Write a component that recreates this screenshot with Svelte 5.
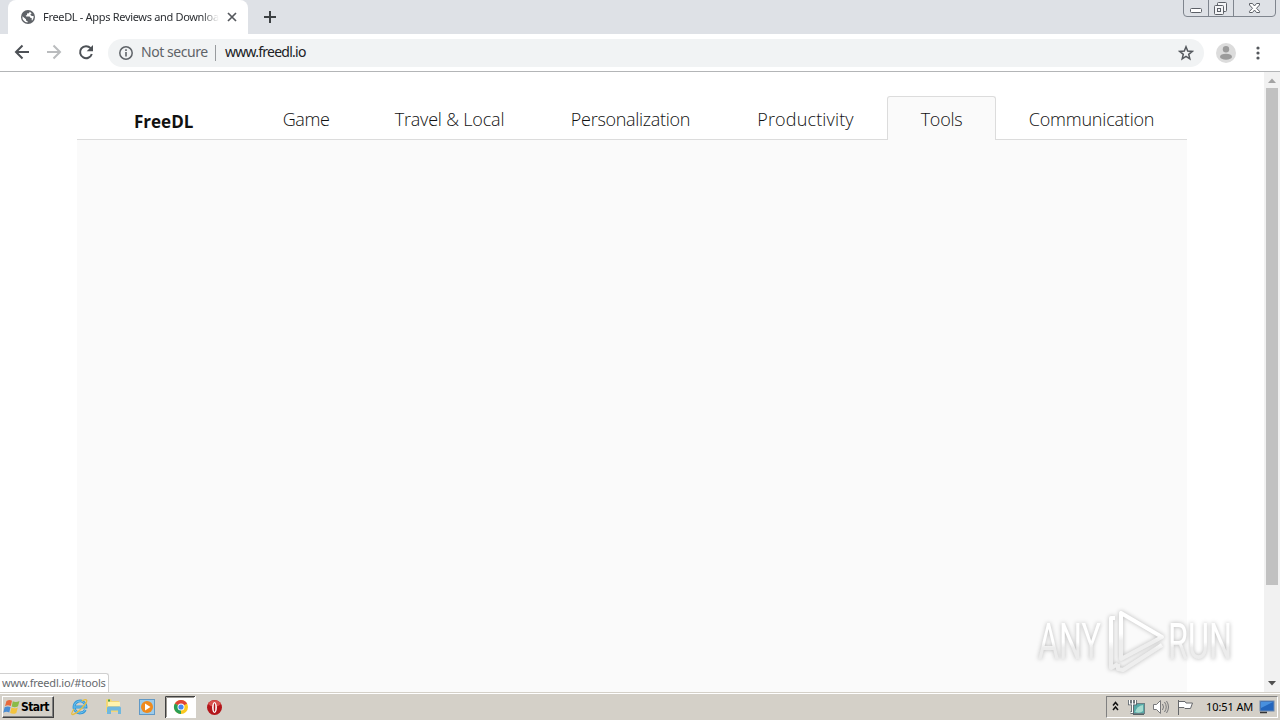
<script lang="ts">
  // --- Page navigation ---
  const categories = [
    { name: "Game", hash: "#game", width: 112, spacing: -0.4 },
    { name: "Travel & Local", hash: "#travel", width: 175, spacing: -0.2 },
    { name: "Personalization", hash: "#personalization", width: 187, spacing: -0.3 },
    { name: "Productivity", hash: "#productivity", width: 163, spacing: 0.15 },
    { name: "Tools", hash: "#tools", width: 109, spacing: -0.3 },
    { name: "Communication", hash: "#communication", width: 191, spacing: -0.2 },
  ];

  let active = $state("#tools");
</script>

<div class="desktop">
  <!-- Tab strip -->
  <header class="tabstrip">
    <div class="tab">
      <svg width="14" height="14" viewBox="0 0 14 14">
        <circle cx="7" cy="7" r="7" fill="#5f6368" />
        <path d="M1.4 6.2 5 9.2v1.2l1.6.8v1.3A5.6 5.6 0 0 1 1.4 6.2ZM8.7 1.7 8 3.2 6 3.5v1.7H4.7l.5 1.2h3.4l1 1.7h1.1v2.1l.6.4A5.7 5.7 0 0 0 12.6 6l-1.8.1-1.6-1.4 1.4-1.3A6 6 0 0 0 8.7 1.7Z" fill="#fff" />
      </svg>
      <span class="tab-title">FreeDL - Apps Reviews and Download</span>
      <svg width="10" height="10" viewBox="0 0 10 10">
        <path d="m1 1 8 8M9 1 1 9" stroke="#55585d" stroke-width="1.7" />
      </svg>
    </div>
    <svg class="new-tab" width="12" height="12" viewBox="0 0 12 12">
      <path d="M6 0v12M0 6h12" stroke="#3c4043" stroke-width="2" />
    </svg>
    <svg class="window-buttons" width="94" height="18" viewBox="0 0 94 18" fill="none">
      <path d="M.5 0v13q0 3.5 3.5 3.5h85q3.5 0 3.5-3.5V0M25.5 0v16.5M50.5 0v16.5" stroke="#7f858e" />
      <rect x="7.5" y="8.5" width="11" height="4" rx="1" fill="#fff" stroke="#5c6067" />
      <g stroke="#5c6067" fill="#f4f5f7">
        <rect x="34.5" y="2.5" width="9" height="9" rx="1" />
        <rect x="31.5" y="5.5" width="9" height="9" rx="1" />
        <rect x="34.5" y="8.5" width="3" height="3" />
      </g>
      <path d="M66.5 3.5h3l2 2.5 2-2.5h3v1.5L73.5 8.3l3 3v1.2h-3l-2-2.5-2 2.5h-3v-1.2l3-3-3-3.3Z" fill="#fff" stroke="#5c6067" />
    </svg>
  </header>

  <!-- Toolbar -->
  <div class="toolbar">
    <svg width="108" height="37" viewBox="0 0 108 37" fill="none" stroke-width="2">
      <path d="M29 18H16.5M22.5 11.5 16 18l6.5 6.5" stroke="#4d5156" />
      <path d="M47 18h12.5M53.5 11.5 60 18l-6.5 6.5" stroke="#babcbe" />
      <path d="M90.6 14.2A6 6 0 1 0 91.8 20" stroke="#4d5156" />
      <path d="M93 11v6.3h-6.3Z" fill="#4d5156" />
    </svg>
    <div class="omnibox">
      <svg width="14" height="14" viewBox="0 0 14 14">
        <circle cx="7" cy="7" r="6.2" fill="none" stroke="#5f6368" stroke-width="1.5" />
        <path d="M7 6v4.5M7 3.3V5" stroke="#5f6368" stroke-width="1.6" />
      </svg>
      <span class="security">Not secure</span>
      <span class="divider"></span>
      <span class="url">www.freedl.io</span>
      <svg class="star" width="16" height="16" viewBox="0 0 16 16">
        <path d="m8 1.8 1.7 4.3 4.5.3-3.5 2.9 1.1 4.5L8 11.3l-3.800 2.500 1.100-4.500-3.500-2.900 4.500-.3Z" fill="none" stroke="#55595e" stroke-width="1.5" />
      </svg>
    </div>
    <svg class="avatar" width="20" height="20" viewBox="0 0 20 20">
      <circle cx="10" cy="10" r="10" fill="#dcdcdc" />
      <circle cx="10" cy="6.3" r="3.2" fill="#9b9b9b" />
      <ellipse cx="10" cy="13.7" rx="6" ry="3" fill="#9b9b9b" />
    </svg>
    <svg class="menu" width="4" height="14" viewBox="0 0 4 14" fill="#55585d">
      <circle cx="2" cy="2" r="1.6" />
      <circle cx="2" cy="7" r="1.6" />
      <circle cx="2" cy="12" r="1.6" />
    </svg>
  </div>

  <!-- Page -->
  <div class="viewport">
    <main class="page">
      <nav class="categories">
        <a class="brand" href="#home">FreeDL</a>
        {#each categories as category}
          <a
            class="category"
            class:active={active === category.hash}
            href={category.hash}
            style:width="{category.width}px"
            style:letter-spacing="{category.spacing}px"
            onclick={() => (active = category.hash)}
          >
            {category.name}
          </a>
        {/each}
      </nav>
      <section class="content"></section>
    </main>
    <div class="scrollbar">
      <svg width="16" height="16" viewBox="0 0 16 16"><path d="M4 11h8L8 6.5Z" fill="#a3a3a3" /></svg>
      <div class="thumb"></div>
      <svg width="16" height="18" viewBox="0 0 16 18"><path d="M4 7h8l-4 4.5Z" fill="#505050" /></svg>
    </div>

    <div class="status">www.freedl.io/#tools</div>

    <svg class="watermark" width="212" height="72" viewBox="0 0 212 72">
      <defs>
        <linearGradient id="letters" x1="0" y1="0" x2="0" y2="1">
          <stop offset="0.5" stop-color="#fff" />
          <stop offset="0.6" stop-color="#ececec" />
        </linearGradient>
        <linearGradient id="play" x1="0" y1="0" x2="0" y2="1">
          <stop offset="0.45" stop-color="#fff" />
          <stop offset="0.6" stop-color="#eee" />
        </linearGradient>
      </defs>
      <g fill="url(#letters)">
        <text x="10" y="55" textLength="63" lengthAdjust="spacingAndGlyphs">ANY</text>
        <text x="140" y="55" textLength="64" lengthAdjust="spacingAndGlyphs">RUN</text>
      </g>
      <g fill="none" stroke="url(#play)" stroke-width="4" stroke-linejoin="round">
        <path d="M93 9v46l41-22Z" />
        <path d="M87 14h-4v50l7-4M90 60v5l5 1 39-25" />
      </g>
    </svg>
  </div>

  <!-- Taskbar -->
  <footer class="taskbar">
    <button class="start">
      <svg width="17" height="16" viewBox="0 0 17 16">
        <path d="M3.500 2q3-2 5.500-.2L7.800 7Q4.500 5.600 2 7.300Z" fill="#e8693c" />
        <path d="M9.800 2.200q3 1.500 6.700-.3L15 7.300q-3 1.700-6.300.3Z" fill="#8abb48" />
        <path d="M1.600 8.300q3-1.700 5.900-.2L6.300 13.500q-3-1.400-6 .3Z" fill="#4a8dd4" />
        <path d="M8.500 8.600q3 1.500 6.300-.2l-1.500 5.500q-3 1.800-6.200.2Z" fill="#f3c33e" />
      </svg>
      <span>Start</span>
    </button>
    <svg width="180" height="28" viewBox="0 0 180 28">
      <!-- Internet Explorer -->
      <g fill="none">
        <path d="M31.3 17.8A6 6 0 1 1 32 15H21" stroke="#3397d8" stroke-width="2.8" />
        <path d="M31.3 17.8A6 6 0 1 1 32 15H21" stroke="#7fd0f4" stroke-width="0.8" />
        <path d="M20 17q-4 6-1 5.5 4-1 8-5.5 6-6 5.8-8.5-.8-2-5 .5" stroke="#e8bd3d" stroke-width="1.3" />
      </g>
      <!-- Explorer -->
      <path d="M52 8q0-1 1-1h4l1 2h7v11H52Z" fill="#f2d778" />
      <path d="M54 10h12v4H54Z" fill="#fff3ae" />
      <path d="M53 22v-6q0-1.5 1.5-1.5h11q1.5 0 1.5 1.5v6h-3v-3.5h-7V22Z" fill="#6fb8df" />
      <path d="M54 8.5h2" stroke="#4da14c" stroke-width="2" />
      <!-- Media player -->
      <rect x="85.5" y="7.5" width="15" height="15" fill="#9ccbea" stroke="#6199c6" />
      <circle cx="93" cy="15" r="6" fill="#ef8a1d" />
      <path d="m91 11.5 5.5 3.5-5.5 3.5Z" fill="#fff" />
      <!-- Chrome, pressed -->
      <rect x="111" y="4" width="31" height="22" fill="#fff" />
      <path d="M111.5 26V4.5H141" fill="none" stroke="#404040" />
      <path d="M112.5 25V5.5H140" fill="none" stroke="#9b9892" />
      <circle cx="127" cy="15" r="7" fill="#fbc91f" />
      <path d="M127 15 120.9 11.5A7 7 0 0 1 133.1 11.5Z" fill="#df4437" />
      <path d="M127 15 120.9 11.5A7 7 0 0 0 127 22Z" fill="#2a9e55" />
      <circle cx="127" cy="15" r="3.5" fill="#fff" />
      <circle cx="127" cy="15" r="2.6" fill="#4688f1" />
      <!-- Opera -->
      <circle cx="160.5" cy="15.5" r="7.5" fill="#b3161b" />
      <path d="M154 12a7.5 7.5 0 0 1 13 0q-3 3-6.5 3T154 12Z" fill="#d8504d" />
      <ellipse cx="160.5" cy="15.5" rx="2.4" ry="5.4" fill="#fff" />
      <ellipse cx="160.5" cy="15.5" rx="0.8" ry="4.2" fill="#b3161b" />
    </svg>
    <div class="tray">
      <svg width="92" height="20" viewBox="0 0 92 20" fill="none">
        <path d="m6 8.500 2.500-3 2.500 3M6 13l2.500-3 2.500 3" stroke="#111" stroke-width="1.5" />
        <!-- Network -->
        <rect x="26.5" y="6.5" width="11" height="10" fill="#57a9a7" stroke="#6c8084" />
        <path d="M28 15q2-6 8-7v6q-3 3-8 1Z" fill="#a5dbcf" />
        <path d="M26 17.5h11" stroke="#556266" />
        <path d="M22.5 3v4h6V3M25.5 3v12.5h-2" stroke="#48525a" stroke-width="2.6" />
        <path d="M22.5 3v4h6V3M25.5 3v12.5h-2" stroke="#fff" stroke-width="1.2" />
        <!-- Volume -->
        <path d="M46.5 7.5h3l4-4v13l-4-4h-3Z" fill="#fff" stroke="#77787a" />
        <path d="M55.5 7q2 3 0 6M57.500 5q3.500 5 0 10M59.500 4q4 6 0 12" stroke="#77787a" />
        <!-- Action centre -->
        <path d="M71.5 3v15M72 4.500h6l1 1.500h6.500L83.500 11.500H78l-1-1h-5" fill="#fff" stroke="#66686b" />
      </svg>
      <span class="clock">10:51 AM</span>
      <svg class="show-desktop" width="16" height="14" viewBox="0 0 16 14">
        <rect x="1" y="1" width="14" height="10" fill="#2466bd" stroke="#6c88ad" />
        <path d="M2 2h12L2 8Z" fill="#4990de" />
        <path d="M1 12.5h7" stroke="#333" stroke-width="1.5" />
      </svg>
    </div>
  </footer>
</div>

<style>
  :global(body) {
    overflow: hidden;
  }

  .desktop {
    display: flex;
    flex-direction: column;
    width: 1280px;
    height: 720px;
    background: #fff;
    color: #202124;
    font-family: "Noto Sans", sans-serif;
    font-size: 11px;
  }

  svg {
    display: block;
    flex: none;
  }

  /* Tab strip */
  .tabstrip {
    display: flex;
    height: 34px;
    background: #dee1e6;
  }

  .tab {
    display: flex;
    align-items: center;
    box-sizing: border-box;
    width: 240px;
    margin-left: 8px;
    padding: 0 11px 0 13px;
    border-radius: 8px 8px 0 0;
    background: #fff;
  }

  .tab-title {
    flex: 1;
    margin: 0 8px;
    padding-bottom: 1px;
    overflow: hidden;
    color: #2c2f33;
    letter-spacing: -0.32px;
    white-space: nowrap;
    mask-image: linear-gradient(to right, #000 90%, transparent);
  }

  .new-tab {
    margin: 11px 0 0 16px;
  }

  .window-buttons {
    margin-left: auto;
    margin-right: 3px;
  }

  /* Toolbar */
  .toolbar {
    display: flex;
    align-items: center;
    height: 37px;
    border-bottom: 1px solid #b3b5b7;
  }

  .omnibox {
    display: flex;
    align-items: center;
    box-sizing: border-box;
    width: 1096px;
    height: 28px;
    padding: 0 10px 0 11px;
    border-radius: 14px;
    background: #f1f3f4;
    font-size: 14px;
  }

  .security {
    width: 68px;
    margin-left: 8px;
    padding-bottom: 2px;
    color: #5f6368;
    letter-spacing: -0.45px;
    white-space: nowrap;
  }

  .divider {
    width: 1px;
    height: 16px;
    margin: 0 9px 0 6px;
    background: #989b9e;
  }

  .url {
    padding-bottom: 2px;
    letter-spacing: -0.75px;
  }

  .star {
    margin-left: auto;
  }

  .avatar {
    margin-left: 12px;
  }

  .menu {
    margin-left: 20px;
  }

  /* Page */
  .viewport {
    position: relative;
    display: flex;
    height: 620px;
  }

  .page {
    display: flex;
    flex-direction: column;
    box-sizing: border-box;
    width: 1264px;
    padding: 24px 77px 0;
  }

  .categories {
    display: flex;
    height: 44px;
    font-family: "Open Sans", sans-serif;
    box-shadow: inset 0 -1px #dcdcdc;
  }

  .categories a {
    color: #111;
    text-decoration: none;
    white-space: nowrap;
  }

  .brand {
    box-sizing: border-box;
    width: 173px;
    padding-left: 57px;
    font-size: 17px;
    font-weight: 700;
    line-height: 52px;
  }

  .category {
    box-sizing: border-box;
    border: 1px solid transparent;
    border-bottom: 0;
    border-radius: 3px 3px 0 0;
    font-size: 18px;
    font-weight: 300;
    line-height: 44px;
    text-align: center;
  }

  .category.active {
    border-color: #dcdcdc;
    background: #fafafa;
  }

  .content {
    flex: 1;
    background: #fafafa;
  }

  .scrollbar {
    display: flex;
    flex-direction: column;
    width: 16px;
    background: #f1f1f1;
  }

  .thumb {
    width: 12px;
    height: 497px;
    margin: 0 auto auto;
    background: #c1c1c1;
  }

  .status {
    position: absolute;
    bottom: 0;
    left: 0;
    box-sizing: border-box;
    width: 109px;
    height: 19px;
    padding-left: 2px;
    border: 1px solid #d0d0d0;
    border-width: 1px 1px 0 0;
    border-radius: 0 3px 0 0;
    background: #fff;
    color: #66696d;
    letter-spacing: -0.2px;
    line-height: 18px;
    white-space: nowrap;
  }

  .watermark {
    position: absolute;
    right: 40px;
    bottom: 16px;
    overflow: visible;
    font-family: "Roboto", sans-serif;
    font-size: 50px;
    filter: drop-shadow(0 0 2px #b8b8b8);
  }

  /* Taskbar */
  .taskbar {
    display: flex;
    height: 28px;
    background: #d4d0c8;
    box-shadow: inset 0 1px #d4d0c8, inset 0 2px #fff;
  }

  .start {
    display: flex;
    align-items: center;
    gap: 1px;
    box-sizing: border-box;
    width: 52px;
    height: 22px;
    margin: 4px 0 0 2px;
    padding: 0;
    border: 1px solid;
    border-color: #fff #404040 #404040 #fff;
    background: #d4d0c8;
    box-shadow: inset -1px -1px #808080;
    color: #000;
    font: 700 12px "DejaVu Sans Condensed", sans-serif;
    letter-spacing: -0.6px;
  }

  .tray {
    display: flex;
    align-items: center;
    box-sizing: border-box;
    width: 172px;
    height: 22px;
    margin: 4px 2px 0 auto;
    border: 1px solid;
    border-color: #808080 #fff #fff #808080;
  }

  .clock {
    width: 48px;
    margin-left: 7px;
    padding-bottom: 1px;
    color: #000;
    letter-spacing: -0.1px;
    white-space: nowrap;
  }

  .show-desktop {
    margin-left: 5px;
  }
</style>
